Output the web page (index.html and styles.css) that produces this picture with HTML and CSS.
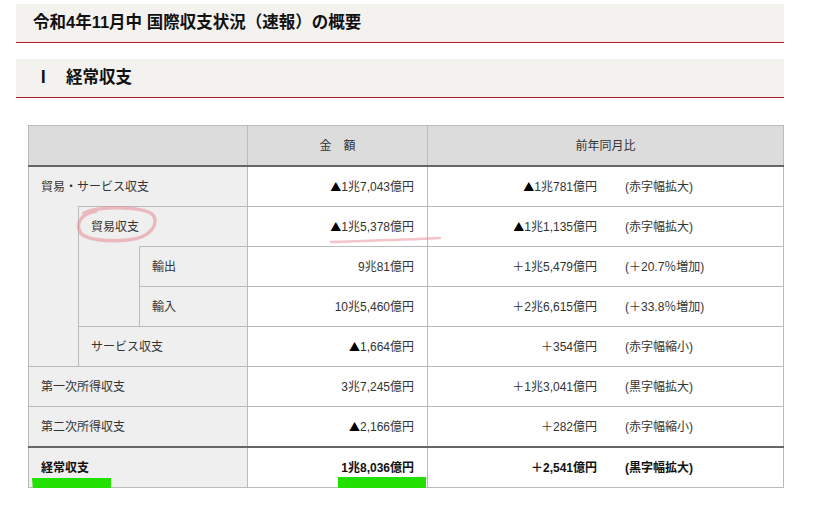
FILE: index.html
```html
<!DOCTYPE html>
<html lang="ja">
<head>
<meta charset="utf-8">
<link rel="stylesheet" href="styles.css">
</head>
<body>
<div class="page">
  <h1 class="title">令和4年11月中 国際収支状況（速報）の概要</h1>
  <h2 class="section"><span class="num">Ⅰ</span>経常収支</h2>
  <table class="bop">
    <colgroup><col class="c1"><col class="c2"><col class="c3"><col class="c4"><col class="c5"></colgroup>
    <thead>
      <tr><th colspan="3" class="blank"></th><th>金　額</th><th>前年同月比</th></tr>
    </thead>
    <tbody>
      <tr><td colspan="3" class="lbl">貿易・サービス収支</td><td class="amt"><span class="tri">▲</span>1兆7,043億円</td><td class="yoy"><div class="yg"><span class="v"><span class="tri">▲</span>1兆781億円</span><span>(赤字幅拡大)</span></div></td></tr>
      <tr><td rowspan="4" class="lbl sp"></td><td colspan="2" class="lbl">貿易収支</td><td class="amt"><span class="tri">▲</span>1兆5,378億円</td><td class="yoy"><div class="yg"><span class="v"><span class="tri">▲</span>1兆1,135億円</span><span>(赤字幅拡大)</span></div></td></tr>
      <tr><td rowspan="2" class="lbl sp"></td><td class="lbl">輸出</td><td class="amt">9兆81億円</td><td class="yoy"><div class="yg"><span class="v">＋1兆5,479億円</span><span>(＋20.7％増加)</span></div></td></tr>
      <tr><td class="lbl">輸入</td><td class="amt">10兆5,460億円</td><td class="yoy"><div class="yg"><span class="v">＋2兆6,615億円</span><span>(＋33.8％増加)</span></div></td></tr>
      <tr><td colspan="2" class="lbl">サービス収支</td><td class="amt"><span class="tri">▲</span>1,664億円</td><td class="yoy"><div class="yg"><span class="v">＋354億円</span><span>(赤字幅縮小)</span></div></td></tr>
      <tr><td colspan="3" class="lbl">第一次所得収支</td><td class="amt">3兆7,245億円</td><td class="yoy"><div class="yg"><span class="v">＋1兆3,041億円</span><span>(黒字幅拡大)</span></div></td></tr>
      <tr><td colspan="3" class="lbl">第二次所得収支</td><td class="amt"><span class="tri">▲</span>2,166億円</td><td class="yoy"><div class="yg"><span class="v">＋282億円</span><span>(赤字幅縮小)</span></div></td></tr>
      <tr class="total"><td colspan="3" class="lbl">経常収支</td><td class="amt">1兆8,036億円</td><td class="yoy"><div class="yg"><span class="v">＋2,541億円</span><span>(黒字幅拡大)</span></div></td></tr>
    </tbody>
  </table>
  <svg class="marks" width="820" height="512" viewBox="0 0 820 512">
    <path d="M84 213 C 100 206, 140 206, 152 214 C 160 222, 152 238, 128 240 C 108 242, 84 240, 80 232 C 76 224, 80 214, 96 211" fill="none" stroke="#e88a93" stroke-opacity="0.55" stroke-width="3.5" stroke-linecap="round"/>
    <path d="M331 242 C 360 241, 400 240, 440 238" fill="none" stroke="#e88a93" stroke-opacity="0.5" stroke-width="2.5" stroke-linecap="round"/>
    <path d="M32 478 L111 478 L111 490 L33 491 Z" fill="#22e000"/>
    <rect x="338" y="477" width="88" height="11" fill="#22e000"/>
  </svg>
</div>
</body>
</html>
```

FILE: styles.css
```css
html, body { margin: 0; padding: 0; background: #fff; }
body {
  font-family: "Liberation Sans", "Noto Sans CJK JP", sans-serif;
  color: #222;
}
.page {
  position: relative;
  width: 768px;
  padding: 4px 0 0 16px;
}
.title, .section {
  margin: 0;
  background: #f4f2ef;
  border-bottom: 1px solid #b51b25;
  height: 38px;
  line-height: 37px;
  font-size: 16.5px;
  font-weight: bold;
  color: #111;
  padding-left: 17px;
}
.section {
  margin-top: 16px;
  padding-left: 19px;
}
.section .num { display: inline-block; width: 31px; }
.bop {
  margin: 27px 0 0 12px;
  width: 755px;
  border-collapse: collapse;
  table-layout: fixed;
  font-size: 12px;
  line-height: 16px;
  color: #333;
}
.c1 { width: 50px; }
.c2 { width: 61px; }
.c3 { width: 108px; }
.c4 { width: 180px; }
.c5 { width: 356px; }
.bop th, .bop td {
  border: 1px solid #bbb;
  height: 39px;
  padding: 0;
}
.bop th {
  background: #dcdcdc;
  font-weight: normal;
  text-align: center;
  border-bottom: 2px solid #666;
}
.bop .lbl {
  background: #efefef;
  padding-left: 12px;
  text-align: left;
}
.bop .sp { border-top: hidden; }
.bop .amt {
  text-align: right;
  padding-right: 13px;
  background: #fff;
}
.bop .yoy { background: #fff; }
.tri {
  font-family: "Noto Sans CJK JP", sans-serif;
  font-size: 11px;
  line-height: 1;
  color: #000;
}
.yg {
  display: grid;
  grid-template-columns: 169px auto;
  column-gap: 28px;
}
.yg .v { text-align: right; }
.total td {
  border-top: 2px solid #666;
  font-weight: bold;
  color: #111;
}
.marks {
  position: absolute;
  left: 0;
  top: 0;
  pointer-events: none;
}
```
